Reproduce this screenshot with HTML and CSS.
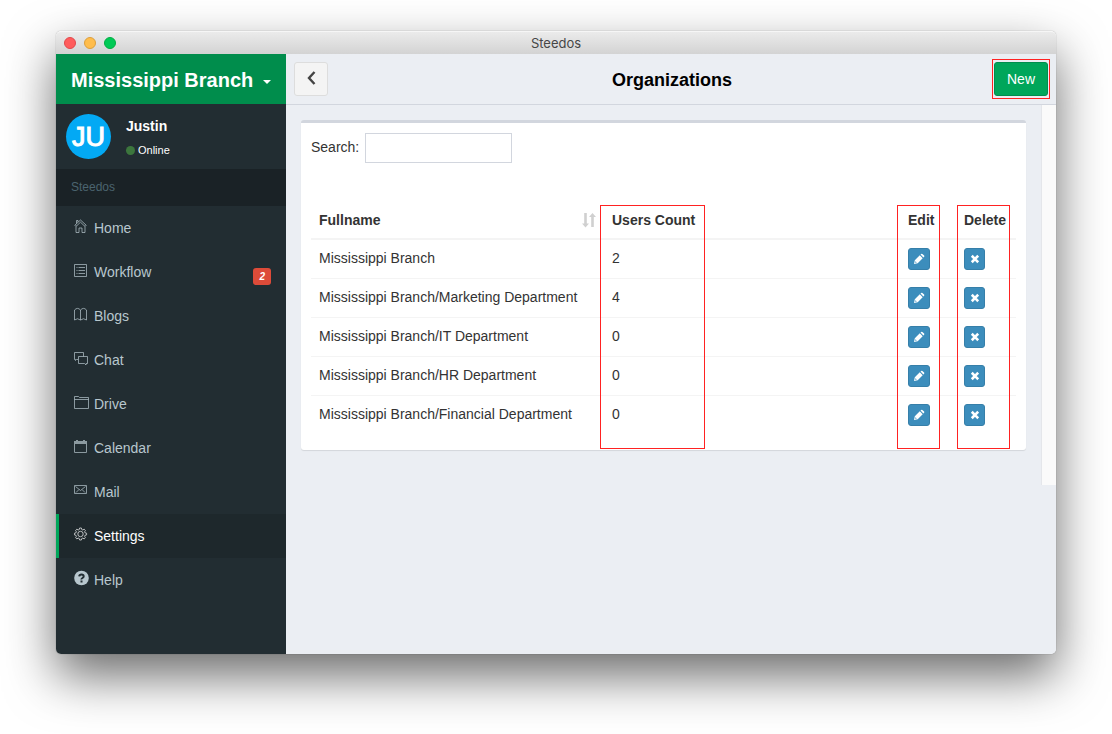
FILE: index.html
```html
<!DOCTYPE html>
<html lang="en">
<head>
<meta charset="utf-8">
<meta name="viewport" content="width=device-width, initial-scale=1">
<title>Steedos</title>
<link rel="stylesheet" href="styles.css">
</head>
<body>
<svg class="sprite" aria-hidden="true">
  <symbol id="pencil" viewBox="0 0 12 12"><path fill="currentColor" fill-rule="evenodd" d="M1 11l.8-3.700L6.800 2.300l2.900 2.900-5 5zM7.500 1.600l.7-.7q.6-.5 1.200 0L11.100 2.600q.5.600 0 1.200l-.7.700zM2.500 8.200L2.200 9.800l1.600-.3z"/></symbol>
  <symbol id="cross" viewBox="0 0 12 12"><path d="M3.700 3.700l4.600 4.600M8.300 3.700L3.700 8.300" stroke="currentColor" stroke-width="2.600" stroke-linecap="square"/></symbol>
</svg>
<div class="window">
  <div class="titlebar">
    <div class="lights"><span class="light red"></span><span class="light amber"></span><span class="light green"></span></div>
    <span class="app-name">Steedos</span>
  </div>
  <div class="shell">
    <aside class="sidebar">
      <button class="brand" type="button"><span>Mississippi Branch</span><span class="caret"></span></button>
      <div class="user">
        <div class="avatar">JU</div>
        <div class="user-info"><strong>Justin</strong><a class="status" href="#"><span class="dot"></span>Online</a></div>
      </div>
      <div class="section">Steedos</div>
      <nav class="menu">
        <a href="#"><svg class="icon" viewBox="0 0 15 15"><path d="M.5 6.500L6.500 1l6 5.500M2.500 4.500v-3h1.500v1.500M2 6v7.500h3V9h3v4.500h3V6M2.500 7L6.500 3.200 10.500 7"/></svg>Home</a>
        <a href="#"><svg class="icon" viewBox="0 0 15 15"><path d="M.5 1.500h12v12H.5zM2.500 4.500h1M4.500 4.500H11M2.500 7.500h1M4.500 7.500H11M2.500 10.500h1M4.500 10.500H11"/></svg>Workflow<span class="badge">2</span></a>
        <a href="#"><svg class="icon" viewBox="0 0 15 15"><path d="M6.500 3Q3.500-.2.500 3v10q3-2.500 6 0zM6.500 3q3-3.200 6 0v10q-3-2.500-6 0"/></svg>Blogs</a>
        <a href="#"><svg class="icon" viewBox="0 0 15 15"><path d="M4 8.500H2.500L1.500 9.500V8.500H.5v-7h9v4M4.500 5.500h9v7H12V14l-1.500-1.500h-6z"/></svg>Chat</a>
        <a href="#"><svg class="icon" viewBox="0 0 15 15"><path d="M.5 13.500v-12h4l1 1h9v11zM.5 4.500h14"/></svg>Drive</a>
        <a href="#"><svg class="icon" viewBox="0 0 15 15"><path d="M.5 2.500h12v11H.5z"/><path class="solid" d="M0 2h2V1h2v1h5V1h2v1h2v3H0z"/></svg>Calendar</a>
        <a href="#"><svg class="icon" viewBox="0 0 15 15"><path d="M.5 2.500h12v8H.5zM1.500 3.500l5 4 5-4M2 9.500l3-3M11 9.500l-3-3"/></svg>Mail</a>
        <a href="#" class="active" aria-current="page"><svg class="icon" viewBox="0 0 15 15"><circle cx="6.500" cy="7" r="2.700"/><path d="M5.600 1h1.800l.4 1.600 1 .4 1.400-.8 1.200 1.200-.8 1.400.4 1 1.600.4v1.700l-1.600.4-.4 1 .8 1.400-1.200 1.200-1.400-.8-1 .4-.4 1.500H5.600l-.4-1.500-1-.4-1.400.8-1.200-1.200.8-1.400-.4-1-1.500-.4V6.200l1.500-.4.4-1-.8-1.400 1.200-1.200 1.400.8 1-.4z"/></svg>Settings</a>
        <a href="#"><svg class="icon" viewBox="0 0 15 15"><circle class="solid" cx="7.500" cy="7" r="7.300"/><path class="mark" d="M5.200 5.300Q5.400 3.500 7.500 3.500t2.200 1.800Q9.700 6.300 8.500 7T7.500 8.500M7.500 9.600v2"/></svg>Help</a>
      </nav>
    </aside>
    <main class="main">
      <header class="header">
        <button class="back" type="button" aria-label="Back"><svg viewBox="0 0 12 16"><path d="M9.500 2L4 8l5.500 6"/></svg></button>
        <h1>Organizations</h1>
        <div class="new-mark"><button class="new" type="button">New</button></div>
      </header>
      <div class="body">
        <section class="panel">
          <div class="search"><label for="q">Search:</label><input id="q" type="search"></div>
          <div class="grid">
          <table>
            <colgroup><col class="c-name"><col class="c-users"><col class="c-edit"><col class="c-delete"></colgroup>
            <thead><tr><th><div class="sortable">Fullname<svg viewBox="0 0 14 16"><path d="M2.200 1h2.600v10.500H7L3.500 15.500 0 11.500h2.200zM9.200 15V5H7l3.500-4L14 5h-2.200v10z"/></svg></div></th><th>Users Count</th><th>Edit</th><th>Delete</th></tr></thead>
            <tbody>
              <tr><td>Mississippi Branch</td><td>2</td><td><button class="act" type="button" aria-label="Edit"><svg><use href="#pencil"/></svg></button></td><td><button class="act del" type="button" aria-label="Delete"><svg><use href="#cross"/></svg></button></td></tr>
              <tr><td>Mississippi Branch/Marketing Department</td><td>4</td><td><button class="act" type="button" aria-label="Edit"><svg><use href="#pencil"/></svg></button></td><td><button class="act del" type="button" aria-label="Delete"><svg><use href="#cross"/></svg></button></td></tr>
              <tr><td>Mississippi Branch/IT Department</td><td>0</td><td><button class="act" type="button" aria-label="Edit"><svg><use href="#pencil"/></svg></button></td><td><button class="act del" type="button" aria-label="Delete"><svg><use href="#cross"/></svg></button></td></tr>
              <tr><td>Mississippi Branch/HR Department</td><td>0</td><td><button class="act" type="button" aria-label="Edit"><svg><use href="#pencil"/></svg></button></td><td><button class="act del" type="button" aria-label="Delete"><svg><use href="#cross"/></svg></button></td></tr>
              <tr><td>Mississippi Branch/Financial Department</td><td>0</td><td><button class="act" type="button" aria-label="Edit"><svg><use href="#pencil"/></svg></button></td><td><button class="act del" type="button" aria-label="Delete"><svg><use href="#cross"/></svg></button></td></tr>
            </tbody>
          </table>
          <div class="mark-box m-users"></div><div class="mark-box m-edit"></div><div class="mark-box m-delete"></div>
          </div>
        </section>
        <div class="track"></div>
      </div>
    </main>
  </div>
</div>
</body>
</html>
```
FILE: styles.css
```css
* { box-sizing: border-box; }
body {
  margin: 0;
  min-height: 100vh;
  padding: 31px 56px 80px;
  display: flex;
  flex-direction: column;
  background: #fff;
  color: #333;
  font: 14px/20px "Liberation Sans", Arial, sans-serif;
}
button, input { font: inherit; color: inherit; margin: 0; }
a { color: inherit; text-decoration: none; }
.sprite { position: absolute; width: 0; height: 0; }
.window {
  flex: 1;
  display: flex;
  flex-direction: column;
  border-radius: 5px;
  box-shadow: 0 0 1px rgba(0,0,0,.5), 0 22px 50px rgba(0,0,0,.58);
}
.titlebar {
  display: grid;
  grid-template-columns: 1fr auto 1fr;
  align-items: center;
  height: 23px;
  padding: 0 8px;
  border-radius: 5px 5px 0 0;
  background: linear-gradient(#ebebeb, #d3d3d3);
  border-top: 1px solid #f6f6f6;
}
.lights { display: flex; gap: 8px; }
.light { width: 12px; height: 12px; border-radius: 50%; border: 1px solid; }
.red { background: #ff5c5c; border-color: #e2484b; }
.amber { background: #ffbd4c; border-color: #dd9f3c; }
.green { background: #00ca56; border-color: #00ae42; }
.app-name { font: 13px/20px Inter, Roboto, sans-serif; color: #464646; }
.shell { flex: 1; display: flex; border-radius: 0 0 5px 5px; overflow: hidden; }
.sidebar { flex: none; width: 230px; background: #222d32; color: #b8c7ce; }
.brand {
  display: flex;
  align-items: center;
  justify-content: space-between;
  width: 100%;
  height: 50px;
  padding: 2px 15px 0;
  border: 0;
  background: #008d4c;
  color: #fff;
  font-size: 20px;
  font-weight: bold;
}
.brand .caret { margin-top: 3px; border: 4px solid transparent; border-top-color: #fff; border-bottom: 0; }
.user { display: flex; gap: 15px; padding: 10px; color: #fff; }
.avatar {
  width: 45px;
  height: 45px;
  border-radius: 50%;
  background: #03a9f4;
  font: 500 27px/47px "Liberation Sans", Arial, sans-serif;
  -webkit-text-stroke: 1px #fff;
  text-align: center;
}
.user-info { display: flex; flex-direction: column; gap: 5px; padding-top: 2px; }
.status { display: flex; align-items: center; gap: 3px; font-size: 11px; line-height: 18px; }
.dot { width: 9px; height: 9px; border-radius: 50%; background: #3c763d; }
.section { padding: 8px 15px 9px; background: #1a2226; color: #4b646f; font-size: 12px; }
.menu a {
  display: flex;
  align-items: center;
  gap: 5px;
  height: 44px;
  padding: 0 15px;
  border-left: 3px solid transparent;
}
.menu a.active { background: #1e282c; border-color: #00a65a; color: #fff; }
.icon {
  width: 15px;
  height: 15px;
  margin-bottom: 3px;
  fill: none;
  stroke: currentColor;
  stroke-width: 1;
  opacity: .7;
  overflow: visible;
}
.solid { fill: currentColor; stroke: none; }
.icon .mark { stroke: #222d32; stroke-width: 2; }
.menu a:last-child .icon { opacity: 1; }
.badge {
  margin: 9px 0 0 auto;
  padding: 0 6px;
  border-radius: 3px;
  background: #dd4b39;
  color: #fff;
  font: italic bold 10px/17px "Liberation Sans", Arial, sans-serif;
}
.main { flex: 1; min-width: 0; display: flex; flex-direction: column; background: #ebeef3; }
.header {
  display: grid;
  grid-template-columns: 1fr auto 1fr;
  align-items: center;
  height: 51px;
  padding: 0 6px 0 8px;
  border-bottom: 1px solid #d2d6de;
}
.header h1 { margin: 0; padding-top: 1px; color: #000; font-size: 18px; }
.back {
  display: flex;
  align-items: center;
  justify-content: center;
  width: 34px;
  height: 34px;
  padding: 0;
  border: 1px solid #ddd;
  border-radius: 3px;
  background: #f4f4f4;
}
.back svg { width: 12px; height: 16px; margin-bottom: 3px; fill: none; stroke: #444; stroke-width: 2.4; }
.new-mark { justify-self: end; padding: 2px 1px; border: 1px solid #f22; }
.new {
  display: block;
  padding: 6px 12px;
  border: 1px solid #008d4c;
  border-radius: 3px;
  background: #00a65a;
  color: #fff;
  line-height: 20px;
}
.body { display: flex; align-items: flex-start; }
.panel {
  flex: 1;
  margin: 15px;
  padding: 10px 10px 15px;
  border-top: 3px solid #d2d6de;
  border-radius: 3px;
  background: #fff;
  box-shadow: 0 1px 1px rgba(0,0,0,.1);
}
.search { display: flex; gap: 6px; margin-bottom: 39px; }
.search label { line-height: 28px; }
.search input { width: 147px; height: 30px; padding: 5px 10px; border: 1px solid #d2d6de; border-radius: 0; background: #fff; appearance: none; }
.grid { position: relative; }
table { width: 100%; table-layout: fixed; border-collapse: separate; border-spacing: 0; }
.c-name { width: 293px; }
.c-edit { width: 56px; }
.c-delete { width: 60px; }
th, td { padding: 8px; text-align: left; vertical-align: top; white-space: nowrap; }
th { border-bottom: 2px solid #f4f4f4; }
td { border-bottom: 1px solid #f4f4f4; }
tr:last-child td { border-bottom-color: transparent; }
.sortable { display: flex; justify-content: space-between; align-items: center; }
.sortable svg { width: 14px; height: 16px; fill: #d0d0d0; }
.act {
  display: flex;
  align-items: center;
  justify-content: center;
  width: 22px;
  height: 22px;
  padding: 0;
  border: 1px solid #367fa9;
  border-radius: 3px;
  background: #3c8dbc;
  color: #fff;
}
.act.del { width: 21px; }
.act svg { width: 12px; height: 12px; }
/* Column highlights drawn over the table */
.mark-box { position: absolute; top: 3px; bottom: -14px; border: 1px solid #f22; pointer-events: none; }
.m-users { left: 289px; width: 105px; }
.m-edit { right: 76px; width: 43px; }
.m-delete { right: 6px; width: 53px; }
.track { width: 15px; height: 380px; border-left: 1px solid #e4e6ea; background: #fafafa; }
```
